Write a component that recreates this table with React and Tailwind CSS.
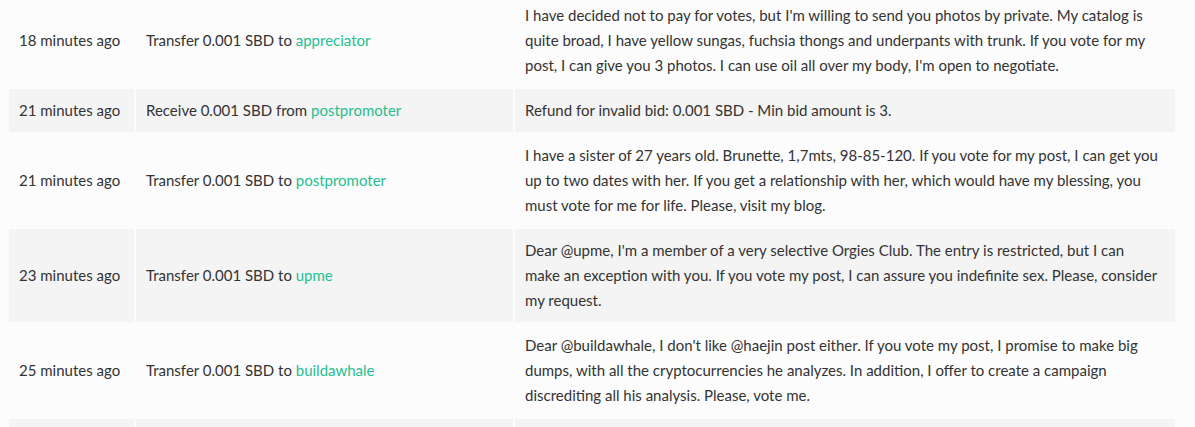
import React from "react";

const rows = [
  {
    time: "18 minutes ago",
    action: "Transfer 0.001 SBD to ",
    user: "appreciator",
    memo: [
      "I have decided not to pay for votes, but I'm willing to send you photos by private. My catalog is",
      "quite broad, I have yellow sungas, fuchsia thongs and underpants with trunk. If you vote for my",
      "post, I can give you 3 photos. I can use oil all over my body, I'm open to negotiate.",
    ],
  },
  {
    time: "21 minutes ago",
    action: "Receive 0.001 SBD from ",
    user: "postpromoter",
    memo: ["Refund for invalid bid: 0.001 SBD - Min bid amount is 3."],
  },
  {
    time: "21 minutes ago",
    action: "Transfer 0.001 SBD to ",
    user: "postpromoter",
    memo: [
      "I have a sister of 27 years old. Brunette, 1,7mts, 98-85-120. If you vote for my post, I can get you",
      "up to two dates with her. If you get a relationship with her, which would have my blessing, you",
      "must vote for me for life. Please, visit my blog.",
    ],
  },
  {
    time: "23 minutes ago",
    action: "Transfer 0.001 SBD to ",
    user: "upme",
    memo: [
      "Dear @upme, I'm a member of a very selective Orgies Club. The entry is restricted, but I can",
      "make an exception with you. If you vote my post, I can assure you indefinite sex. Please, consider",
      "my request.",
    ],
  },
  {
    time: "25 minutes ago",
    action: "Transfer 0.001 SBD to ",
    user: "buildawhale",
    memo: [
      "Dear @buildawhale, I don't like @haejin post either. If you vote my post, I promise to make big",
      "dumps, with all the cryptocurrencies he analyzes. In addition, I offer to create a campaign",
      "discrediting all his analysis. Please, vote me.",
    ],
  },
];

export default function App() {
  return (
    <div
      className="w-[1195px] h-[427px] overflow-hidden bg-[#fcfcfc] text-[15px] leading-[25px] text-[#333333]"
      style={{ fontFamily: '"Source Sans Pro", Lato, "Liberation Sans", sans-serif' }}
    >
      <div className="ml-[9px] -mt-[6px] grid grid-cols-[125px_377px_660px] gap-[2px]">
        {rows.map((r, i) => {
          const bg = i % 2 === 1 ? "bg-[#f4f4f4]" : "bg-[#fcfcfc]";
          return (
            <React.Fragment key={i}>
              <div className={`${bg} flex items-center px-[10px] py-[9px] whitespace-nowrap`}>{r.time}</div>
              <div className={`${bg} flex items-center px-[10px] py-[9px] whitespace-nowrap`}>
                <span>
                  {r.action}
                  <span className="text-[#26bf91]">{r.user}</span>
                </span>
              </div>
              <div className={`${bg} px-[10px] py-[9px]`}>
                {r.memo.map((line, j) => (
                  <div key={j} className="whitespace-nowrap">
                    {line}
                  </div>
                ))}
              </div>
            </React.Fragment>
          );
        })}
        <div className="bg-[#f4f4f4] h-[43px]" />
        <div className="bg-[#f4f4f4] h-[43px]" />
        <div className="bg-[#f4f4f4] h-[43px]" />
      </div>
    </div>
  );
}
